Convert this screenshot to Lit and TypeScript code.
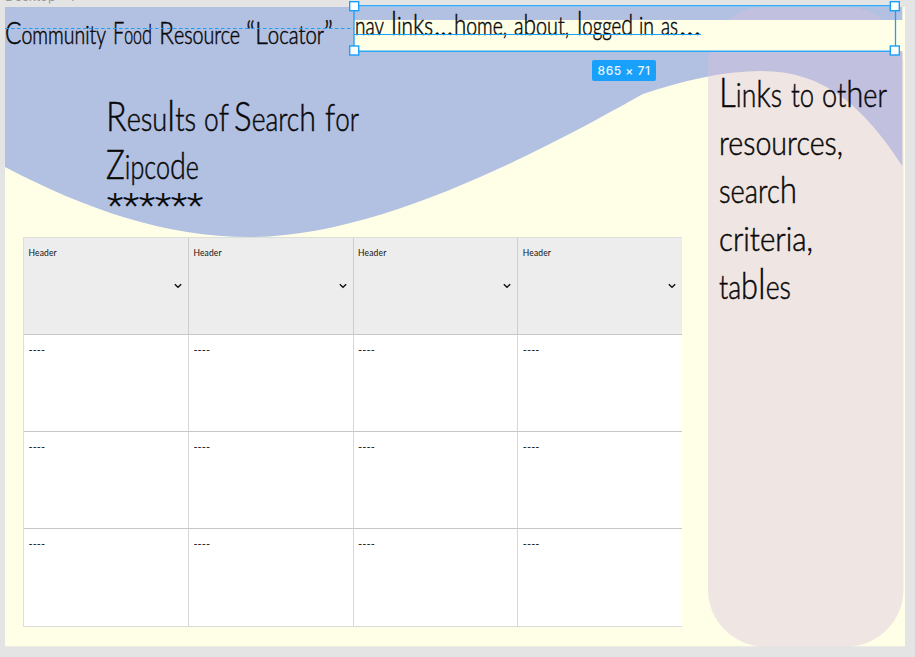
import { LitElement, html, svg, css } from "lit";
import { customElement } from "lit/decorators.js";

type Word = [text: string, x: number, width: number];
type Line = { y: number; size: number; words: Word[]; cls?: string };

const title: Line[] = [
  { y: 43.7, size: 24.5, words: [["Community", 5, 101], ["Food", 113, 39], ["Resource", 159, 81], ["“Locator”", 246, 87]] },
];
const nav: Line[] = [
  { y: 35, size: 25, words: [["nav", 355, 29], ["links", 391, 42], ["...", 434, 19], ["home,", 454, 53], ["about,", 514, 55], ["logged", 577, 56], ["in", 639, 15], ["as", 661, 17], ["...", 679, 22]] },
];
const heading: Line[] = [
  { y: 130.5, size: 33, words: [["Results", 106, 90], ["of", 204, 25], ["Search", 234, 82], ["for", 325, 34]] },
  { y: 178.5, size: 33, words: [["Zipcode", 106, 93]] },
  { y: 216.5, size: 34, words: [["******", 107, 96]], cls: "stars" },
];
const side: Line[] = [
  { y: 106.5, size: 33, words: [["Links", 719, 63], ["to", 791, 23], ["other", 822, 65]] },
  { y: 154.5, size: 33, words: [["resources,", 719, 124]] },
  { y: 202.5, size: 33, words: [["search", 719, 78]] },
  { y: 250.5, size: 33, words: [["criteria,", 719, 94]] },
  { y: 298.5, size: 33, words: [["tables", 719, 72]] },
];

// The lettering has tall capitals and ascenders over a low x-height.
const scaleOf = (ch: string) => (/[A-Z]/.test(ch) ? 1.25 : /[l“”]/.test(ch) ? 1.3 : /[bdfhk]/.test(ch) ? 1.15 : 1);

const runs = (text: string) => {
  const out: { text: string; scale: number }[] = [];
  for (const ch of text) {
    const scale = scaleOf(ch);
    const last = out[out.length - 1];
    if (last && last.scale === scale) last.text += ch;
    else out.push({ text: ch, scale });
  }
  return out;
};

const lines = (list: Line[]) =>
  list.map(
    (l) => svg`${l.words.map(
      ([t, x, w]) => svg`<text class=${l.cls ?? ""} x=${x} y=${l.y} font-size=${l.size} textLength=${w} lengthAdjust="spacingAndGlyphs">${runs(t).map(
        (r) => svg`<tspan font-size=${l.size * r.scale}>${r.text}</tspan>`
      )}</text>`
    )}`
  );

@customElement("data-table")
export class DataTable extends LitElement {
  static styles = css`
    :host { display: block; }
    .grid {
      display: grid;
      grid-template-columns: 164.9px 164.7px 164.7px 164.2px;
      grid-template-rows: 97px 97px 97px 98px;
      border-left: 1px solid #dededb;
      border-top: 1px solid #dededb;
    }
    .cell {
      box-sizing: border-box;
      background: #fff;
      border-right: 1px solid #d8d8d8;
      border-bottom: 1px solid #c6c6c6;
      padding: 8px 6px 0 4.5px;
      font: 8.5px/14px "Lato", sans-serif;
      letter-spacing: 0.15px;
      color: #111;
      display: flex;
      flex-direction: column;
    }
    .cell:nth-child(4n) { border-right: 0; }
    .cell:nth-child(n + 13) { border-bottom-color: #dadada; }
    .head { background: #ededed; border-right-color: #cdcdcd; }
    .dash { font-size: 11px; letter-spacing: 0.1px; }
    .chev { align-self: flex-end; width: 8px; height: 6px; margin-top: 22.5px; }
  `;
  render() {
    return html`<div class="grid">
      ${[0, 1, 2, 3].map(
        () => html`<div class="cell head">
          <span>Header</span>
          <svg class="chev" viewBox="0 0 8 6"><path d="M0.8 1.2 L4 4.2 L7.2 1.2" fill="none" stroke="#111" stroke-width="1.4" /></svg>
        </div>`
      )}
      ${Array.from({ length: 12 }, () => html`<div class="cell dash">----</div>`)}
    </div>`;
  }
}

@customElement("app-root")
export class AppRoot extends LitElement {
  static styles = css`
    :host {
      display: block;
      position: relative;
      width: 915px;
      height: 657px;
      overflow: hidden;
      background: #e4e4e4;
    }
    .layer { position: absolute; left: 0; top: 0; width: 915px; height: 657px; }
    .layer text { font-family: "Lato", sans-serif; font-weight: 300; fill: #080808; stroke: #080808; stroke-width: 0.5px; }
    .layer .stars { font-family: "Roboto", sans-serif; font-weight: 300; stroke-width: 0.2px; }
    .frame-name { position: absolute; left: 5px; top: -12px; font: 13px/16px "Inter", sans-serif; color: #999; white-space: pre; }
    data-table { position: absolute; left: 23px; top: 237px; }
    .size {
      position: absolute;
      left: 592px;
      top: 60px;
      width: 64px;
      height: 21px;
      border-radius: 2px;
      background: #18a0fb;
      color: #e8f5ff;
      font: 500 12px/21px "Inter", sans-serif;
      letter-spacing: 0.5px;
      text-align: center;
      white-space: nowrap;
    }
  `;
  render() {
    return html`
      <div class="frame-name">Desktop - 1</div>
      <svg class="layer" viewBox="0 0 915 657">
        <rect x="5" y="7" width="900" height="639.3" fill="#ffffe8" />
        <path
          d="M5 7 H902.3 V166 C862 104 822 71 762 71 C722 71 682 81 643 94 C550 146 383 237 250 237 C165 237 85 209 5 167 Z"
          fill="#b2c0e2"
        />
        <rect x="708" y="7" width="195.5" height="639.5" rx="57" fill="#d9c1dc" fill-opacity="0.42" />
        <rect x="354" y="20" width="549" height="31" fill="#ffffe8" />
        ${lines(title)}${lines(nav)}${lines(heading)}${lines(side)}
        <g fill="none" stroke="#18a0fb">
          <path d="M5 28.5 H354" stroke-dasharray="3.5 2.5" />
          <path d="M354 34.5 H701" stroke-width="1.2" />
          <rect x="354" y="5.8" width="541.5" height="45.4" stroke-width="1.3" />
          <g fill="#fff" stroke-width="1.4">
            <rect x="349.7" y="1.7" width="9" height="9" />
            <rect x="890.3" y="1.7" width="9" height="9" />
            <rect x="349.7" y="46" width="9" height="9" />
            <rect x="890.3" y="46" width="9" height="9" />
          </g>
        </g>
      </svg>
      <data-table></data-table>
      <div class="size">865 × 71</div>
    `;
  }
}
